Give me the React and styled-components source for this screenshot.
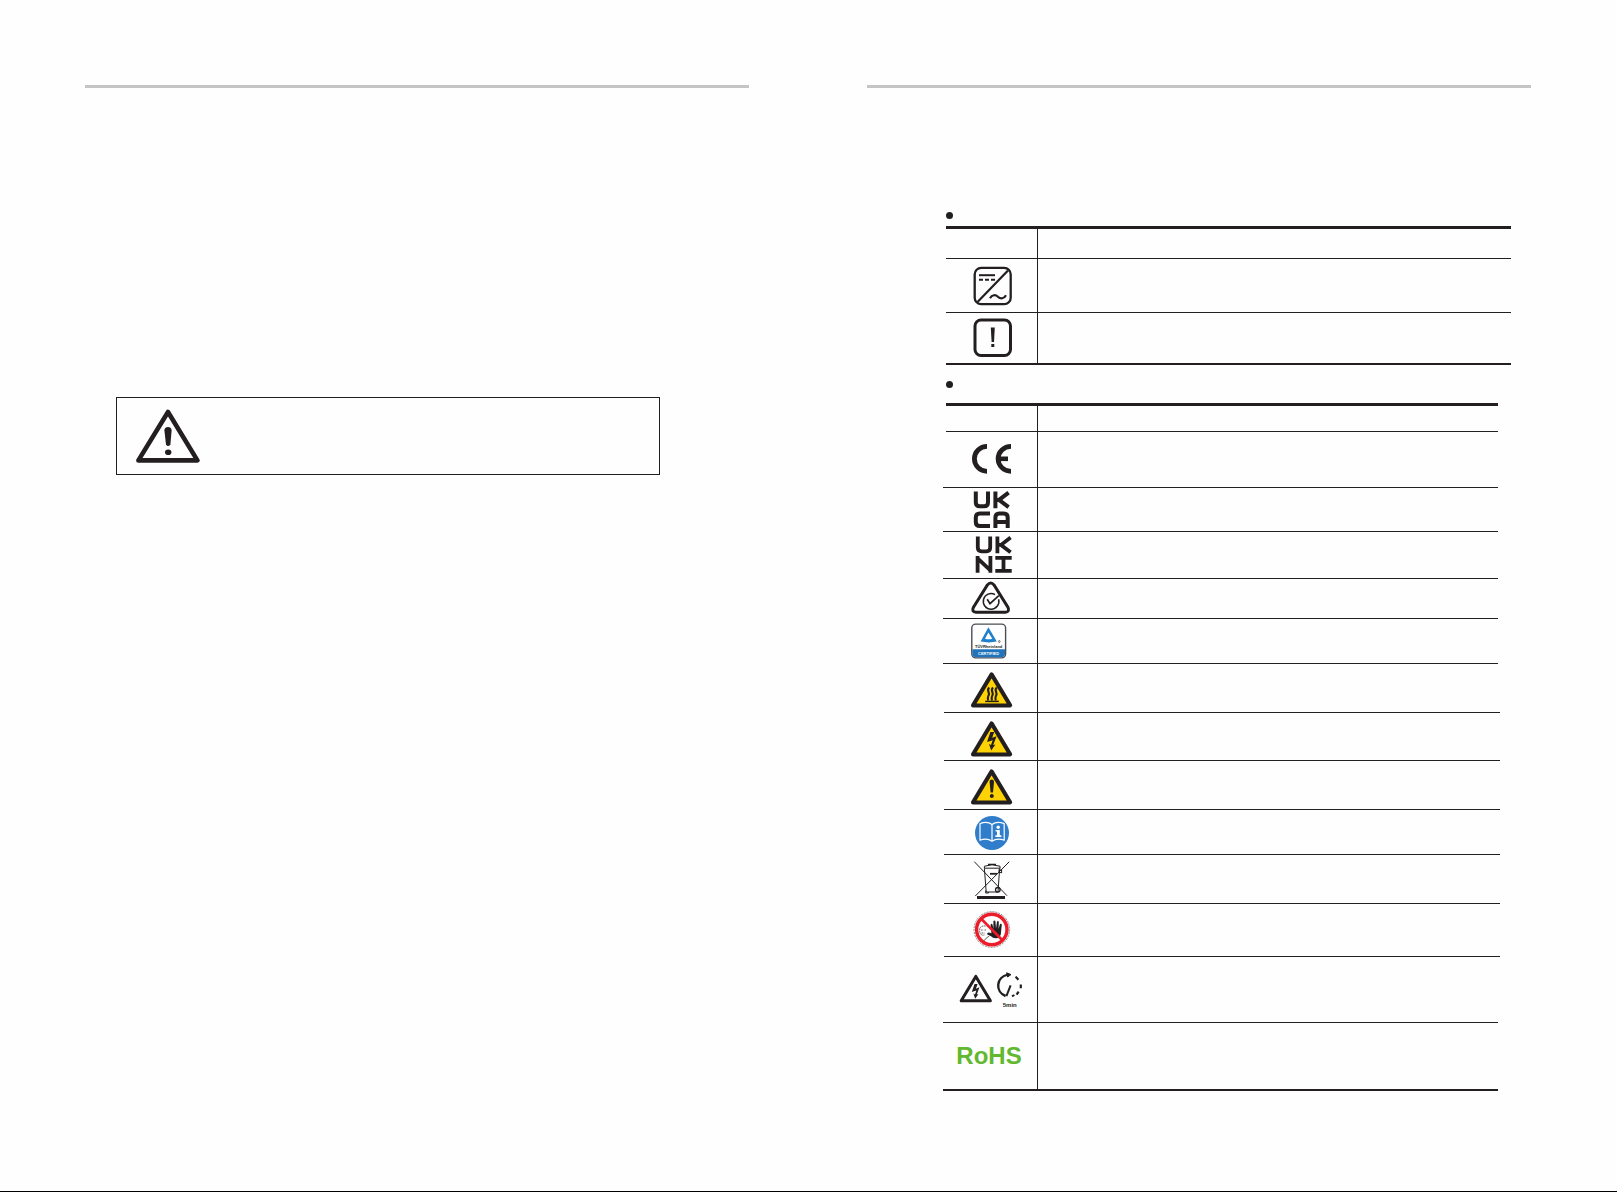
import React from 'react';
import styled, { createGlobalStyle } from 'styled-components';

const ink = '#231f20';

const GlobalStyle = createGlobalStyle`
  * {
    box-sizing: border-box;
  }
  body {
    margin: 0;
    background: #fefefe;
    color: ${ink};
    font-family: "Liberation Sans", Arial, sans-serif;
  }
`;

const Manual = styled.div`
  min-height: 100vh;
  display: flex;
  flex-direction: column;
  border-bottom: 1px solid #000;
`;

const Spread = styled.main`
  flex: 1;
  display: grid;
  grid-template-columns: 1fr 1fr;
  gap: 118px;
  padding: 85px 86px 0 85px;
`;

const Page = styled.section`
  border-top: 3px solid #c5c5c5;
`;

const WarningBox = styled.div`
  display: flex;
  align-items: center;
  height: 78px;
  margin: 309px 89px 0 31px;
  padding-left: 19px;
  border: 1px solid ${ink};
`;

const Symbols = styled.div`
  display: flex;
  flex-direction: column;
  padding: 124px 20px 0 79px;
`;

const Bullet = styled.span`
  width: 7px;
  height: 7px;
  border-radius: 50%;
  background: ${ink};
  margin-top: ${props => props.$gap || 0}px;
`;

const Table = styled.table`
  display: block;
  border-top: 3px solid ${ink};
  margin-top: ${props => props.$gap}px;
  margin-right: ${props => props.$inset || 0}px;
`;

const Group = styled.tbody`
  display: block;
  margin-left: -${props => props.$left || 0}px;
  margin-right: -${props => props.$right || 0}px;
`;

const Row = styled.tr`
  display: flex;
  height: ${props => props.$height}px;
  border-bottom: ${props => (props.$last ? 2 : 1)}px solid ${ink};
`;

const SymbolCell = styled.td`
  display: flex;
  align-items: center;
  justify-content: flex-end;
  width: ${props => 92 + (props.$left || 0)}px;
  padding: 0 5px 0 0;
  border-right: 1px solid ${ink};
`;

const TextCell = styled.td`
  flex: 1;
  padding: 0;
`;

const Svg = styled.svg`
  display: block;
  flex: none;
  width: 80px;
  height: 38px;
  overflow: visible;
`;

const WarningSvg = styled.svg`
  display: block;
  width: 64px;
  height: 54px;
`;

const Rohs = styled.span`
  width: 80px;
  padding-right: 6px;
  text-align: center;
  font-size: 24px;
  line-height: 28px;
  font-weight: 700;
  color: #62b92f;
`;

// every symbol is drawn around 0,0
const Symbol = ({ label, children }) => (
  <Svg viewBox="-40 -19 80 38" fill="none" stroke={ink} role="img" aria-label={label}>
    {children}
  </Svg>
);

const Inverter = () => (
  <Symbol label="Inverter">
    <rect x="-17.3" y="-18.2" width="36" height="36.4" rx="6.5" strokeWidth="2.3" />
    <path d="M-14.5 16 L16 -15.5" strokeWidth="2.2" />
    <path d="M-13 -10.8 H3" strokeWidth="2" />
    <path d="M-13 -6.3 H-9 M-7 -6.3 H-3 M-1 -6.3 H3" strokeWidth="2" />
    <path d="M-2 12.2 C0 8.5 3.5 8.5 6 10.8 C8.5 13 12 13 14 9.2" strokeWidth="2.2" />
  </Symbol>
);

const Notice = () => (
  <Symbol label="Read the instructions">
    <rect x="-17" y="-18" width="35.5" height="35.5" rx="6" strokeWidth="3" />
    <path d="M-1.2 -10.5 H2.8 L2 4 H-0.4 Z" fill={ink} stroke="none" />
    <rect x="-0.7" y="6" width="3" height="3" fill={ink} stroke="none" />
  </Symbol>
);

const CeMark = () => (
  <Symbol label="CE mark">
    <g strokeWidth="4.8">
      <path d="M-5 -13.7 A12.6 12.5 0 0 0 -5 11.3" />
      <path d="M19 -13.7 A12.9 12.5 0 0 0 19 11.3" />
      <path d="M6 -1.2 H16" strokeWidth="4.6" />
    </g>
  </Symbol>
);

const UkcaMark = () => (
  <Symbol label="UKCA mark">
    <g strokeWidth="4">
      <path d="M-16.2 -18.5 V-7.5 Q-16.2 -3.7 -12.4 -3.7 H-7.8 Q-4 -3.7 -4 -7.5 V-18.5" />
      <path d="M3.4 -18.5 V-1.7 M4.5 -10.1 H7 L16.6 -17.4 M7 -10.1 L16.6 -2.8" />
      <path d="M-2 3.5 H-12.2 Q-16.2 3.5 -16.2 7.5 V11.9 Q-16.2 15.9 -12.2 15.9 H-2" />
      <path d="M3.4 18 V7.5 Q3.4 3.5 7.4 3.5 H11.7 Q15.7 3.5 15.7 7.5 V18 M3.4 12 H15.7" />
    </g>
  </Symbol>
);

const UkniMark = () => (
  <Symbol label="UKNI mark">
    <g strokeWidth="3.8">
      <path d="M-14.2 -18.5 V-7.5 Q-14.2 -3.7 -10.4 -3.7 H-5.6 Q-1.8 -3.7 -1.8 -7.5 V-18.5" />
      <path d="M5.4 -18.5 V-1.7 M6.5 -10.1 H9 L18.6 -17.4 M9 -10.1 L18.6 -2.8" />
      <path d="M-14.4 17.7 V1 M-1.6 17.7 V1 M-14.4 3.3 L-1.6 15.4" />
      <path d="M3.3 2.9 H19.7 M3.3 15.8 H19.7 M11.5 3 V16" />
    </g>
  </Symbol>
);

const RcmMark = () => (
  <Symbol label="RCM mark">
    <path
      d="M-4.6 -14 Q-1.3 -18 2 -14 L15.9 8.2 Q18 13 13.2 13.2 H-16 Q-20.8 13 -18.5 8.2 Z"
      strokeWidth="3"
    />
    <path d="M6.6 0.2 A7.8 7.8 0 1 1 3 -4.4" strokeWidth="1.5" />
    <path d="M-4.8 0.2 L-2 4.6 L6.8 -3.4" strokeWidth="1.7" />
  </Symbol>
);

const TuvMark = () => (
  <Symbol label="TUV certified">
    <rect x="-20.2" y="-16.9" width="33.8" height="33.8" rx="4" fill="#fff" strokeWidth="1.4" stroke="#4a4f55" />
    <path d="M-19.6 8.2 H13 V12.7 Q13 16.3 9.2 16.3 H-15.8 Q-19.6 16.3 -19.6 12.7 Z" fill="#1f74bb" stroke="none" />
    <path d="M-3.6 -13.7 L4.8 0.6 Q-3 2.2 -11.4 0.6 Z M-3.6 -8.6 L-7 -2.2 Q-3.4 -1.2 0.3 -2.2 Z" fill="#2080ca" fillRule="evenodd" stroke="none" />
    <g stroke="none" textAnchor="middle" fontFamily="Liberation Sans" fontWeight="700">
      <text x="-3.4" y="6.5" fontSize="4" fill={ink}>TÜVRheinland</text>
      <text x="-3.4" y="14" fontSize="4" fill="#fff">CERTIFIED</text>
    </g>
    <circle cx="7.3" cy="0.5" r="0.9" strokeWidth="0.6" />
  </Symbol>
);

const YellowTriangle = ({ label, children }) => (
  <Symbol label={label}>
    <path d="M-0.4 -13.6 L18.2 17.4 H-19 Z" fill="#ffd203" strokeWidth="4" strokeLinejoin="round" />
    {children}
  </Symbol>
);

const HotSurface = () => (
  <YellowTriangle label="Hot surface">
    <path d="M-6.8 13.4 H6.8" strokeWidth="1.5" />
    <g strokeWidth="2.1">
      <path d="M-2.8 -0.6 C-6.2 2.6 -1.6 4.2 -3.4 7.4 C-4.2 9 -4.8 9.6 -3.8 12.5" />
      <path d="M1 -0.6 C-2.4 2.6 2.2 4.2 0.4 7.4 C-0.4 9 -1 9.6 0 12.5" />
      <path d="M4.8 -0.6 C1.4 2.6 6 4.2 4.2 7.4 C3.4 9 2.8 9.6 3.8 12.5" />
    </g>
  </YellowTriangle>
);

const boltPath = 'M-1.6 -5 H2.2 L0.2 0.8 L4.6 -0.8 L1.2 8 L3.4 7.6 L-0.8 13.4 L-3 7 L-1 8 L0.7 3.2 L-5 5 Z';

const HighVoltage = () => (
  <YellowTriangle label="High voltage">
    <path d={boltPath} fill={ink} stroke="none" />
  </YellowTriangle>
);

const Danger = () => (
  <YellowTriangle label="Danger">
    <path d="M-2.4 -3.2 Q-2.4 -5.4 -0.2 -5.4 Q2 -5.4 2 -3.2 L1 7.4 H-1.4 Z" fill={ink} stroke="none" />
    <circle cx="-0.2" cy="11" r="2" fill={ink} stroke="none" />
  </YellowTriangle>
);

const ReadManual = () => (
  <Symbol label="Read the manual">
    <circle cx="0" cy="1" r="17" fill="#2f7dcb" stroke="none" />
    <g stroke="#fff" strokeWidth="1.2" strokeLinejoin="round">
      <path d="M0 -7.5 C-3.5 -10.2 -8 -10 -12 -8.4 V8.2 C-8 6.8 -3.5 6.8 0 9.2 C3.5 6.8 8 6.8 12.2 8.2 V-8.4 C8 -10 3.5 -10.2 0 -7.5 Z" />
      <path d="M0 -7.5 V9" />
    </g>
    <g fill="#fff" stroke="none">
      <circle cx="6.2" cy="-4.8" r="1.7" />
      <path d="M3.6 -2 H7.8 V3.2 H9.4 V5 H3.4 V3.2 H5 V-0.4 H3.6 Z" />
    </g>
  </Symbol>
);

const Weee = () => (
  <Symbol label="Do not dispose with household waste">
    <path d="M-17.7 -17.3 L15 16.7 M17.3 -17.3 L-16.7 17" strokeWidth="1" />
    <path d="M-7.6 -10.5 L-5.8 13 H6 L7.6 -10.5" strokeWidth="1" />
    <path d="M-8 -10.8 H8.4 M-7.6 -12.8 Q0 -15.6 8 -12.8 V-10.8 M-7.6 -12.8 V-10.8" strokeWidth="1" />
    <path d="M-4 -14.6 H4" strokeWidth="1.3" />
    <path d="M-2 -5.2 H5" strokeWidth="1.8" />
    <rect x="7" y="-9" width="2.6" height="2.6" strokeWidth="1" />
    <circle cx="5.8" cy="10.8" r="2.3" strokeWidth="1.3" />
    <path d="M-6.3 11.5 V14 H-3.5 V13" strokeWidth="1" />
    <rect x="-15" y="17" width="28" height="3" fill={ink} stroke="none" />
  </Symbol>
);

const NoTouch = () => (
  <Symbol label="Do not touch">
    <circle cx="-0.2" cy="-0.5" r="17.8" fill="#fff" stroke="#777" strokeWidth="0.9" strokeDasharray="2 1" />
    <g strokeWidth="0.7">
      <path d="M-6.4 -4 Q-12.8 -4.6 -12.4 1 Q-12 6 -7.6 5 M-11 0 H-8.6 M-7.4 0 H-6 M-10.5 3 H-7.5" strokeDasharray="1.6 0.6" />
      <path d="M-8.6 11.4 Q-5.8 7.4 -2.8 6.2" />
    </g>
    <path
      d="M-4.6 4.6 Q-5.6 2.6 -3 2.4 L-0.6 3.2 L-1.4 -5.6 Q-0.6 -7 0.4 -5.8 L1.4 -1.2 L1.4 -9 Q2.6 -10.2 3.4 -9 L4 -1.4 L5 -8.4 Q6.2 -9.6 6.8 -8.2 L6.6 -1 L8 -6 Q9.4 -6.8 9.8 -5.4 L8.8 4.6 Q7.6 8.2 4 8.2 Q0.6 8 -1 6.2 Z"
      fill={ink}
      stroke="none"
    />
    <circle cx="-0.2" cy="-0.5" r="15.2" stroke="#ed1c2b" strokeWidth="3.4" />
    <path d="M-10.6 -11 L10.2 10" stroke="#ed1c2b" strokeWidth="2.6" />
  </Symbol>
);

const Discharge = () => (
  <Symbol label="Wait 5 minutes">
    <path d="M-16.2 -13.6 L-1.6 10.8 H-30.8 Z" strokeWidth="3" strokeLinejoin="round" />
    <path d={boltPath} transform="translate(-16.2 -2) scale(0.8)" fill={ink} stroke="none" />
    <g strokeWidth="2">
      <path d="M16 -15.4 C4 -13.4 2.8 2 13.6 6" strokeWidth="2.4" />
      <path d="M18.6 -4.6 L14.4 6.2" />
      <path d="M23.6 -13.4 L26.4 -10.2 M28.8 -5.4 V-1.8 M26.6 1.6 L24.6 4.6" strokeWidth="2.2" />
      <path d="M22.4 5 L20 6.4" />
    </g>
    <path d="M14.6 -17.2 L19 -15.4 L15.6 -13 Z" fill={ink} />
    <text x="17.8" y="16.6" fontSize="6" fontWeight="700" textAnchor="middle" fontFamily="Liberation Sans" fill={ink} stroke="none">
      5min
    </text>
  </Symbol>
);

const generalRows = [
  { height: 54, symbol: <Inverter /> },
  { height: 52, symbol: <Notice />, last: true }
];

// the rules of each group start and end together
const labelGroups = [
  {
    left: 3,
    right: 0,
    rows: [
      { height: 56, symbol: <CeMark /> },
      { height: 44, symbol: <UkcaMark /> },
      { height: 47, symbol: <UkniMark /> },
      { height: 40, symbol: <RcmMark /> },
      { height: 45, symbol: <TuvMark /> }
    ]
  },
  {
    left: 2,
    right: 2,
    rows: [
      { height: 49, symbol: <HotSurface /> },
      { height: 48, symbol: <HighVoltage /> },
      { height: 49, symbol: <Danger /> },
      { height: 45, symbol: <ReadManual /> },
      { height: 49, symbol: <Weee /> },
      { height: 53, symbol: <NoTouch /> }
    ]
  },
  {
    left: 3,
    right: 0,
    rows: [
      { height: 66, symbol: <Discharge /> },
      { height: 68, symbol: <Rohs>RoHS</Rohs>, last: true }
    ]
  }
];

const SymbolRows = ({ rows, left, right }) => (
  <Group $left={left} $right={right}>
    {rows.map((row, index) => (
      <Row key={index} $height={row.height} $last={row.last}>
        <SymbolCell $left={left}>{row.symbol}</SymbolCell>
        <TextCell />
      </Row>
    ))}
  </Group>
);

const App = () => (
  <Manual>
    <GlobalStyle />
    <Spread>
      <Page>
        <WarningBox>
          <WarningSvg viewBox="0 0 64 54" fill="none" role="img" aria-label="Warning">
            <path d="M32 3 L61.4 51.4 H2.4 Z" stroke={ink} strokeWidth="4.6" strokeLinejoin="round" />
            <path d="M28.4 21.6 Q28.4 18 32 18 Q35.6 18 35.6 21.6 L34.4 35.4 Q32 38.4 30 35.4 Z" fill={ink} />
            <ellipse cx="32.2" cy="43.2" rx="3.2" ry="2.8" fill={ink} />
          </WarningSvg>
        </WarningBox>
      </Page>
      <Page>
        <Symbols>
          <Bullet />
          <Table $gap={7}>
            <SymbolRows rows={[{ height: 30 }, ...generalRows]} />
          </Table>
          <Bullet $gap={16} />
          <Table $gap={15} $inset={13}>
            <SymbolRows rows={[{ height: 26 }]} />
            {labelGroups.map((group, index) => (
              <SymbolRows key={index} {...group} />
            ))}
          </Table>
        </Symbols>
      </Page>
    </Spread>
  </Manual>
);

export default App;
